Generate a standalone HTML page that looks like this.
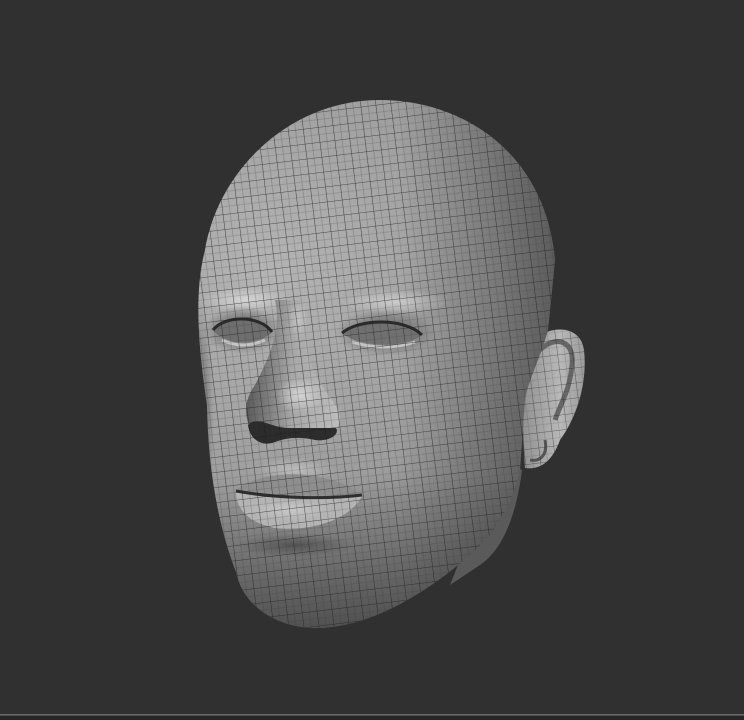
<!DOCTYPE html>
<html><head><meta charset="utf-8"><style>
html,body{margin:0;padding:0;background:#303030;width:744px;height:720px;overflow:hidden}
</style></head><body>
<svg width="744" height="720" viewBox="0 0 744 720" xmlns="http://www.w3.org/2000/svg">
<defs>
<radialGradient id="hg" cx="0.36" cy="0.38" r="0.7">
<stop offset="0" stop-color="#b4b4b4"/>
<stop offset="0.45" stop-color="#9c9c9c"/>
<stop offset="0.8" stop-color="#707070"/>
<stop offset="1" stop-color="#3c3c3c"/>
</radialGradient>
<linearGradient id="rs" x1="0" y1="0" x2="1" y2="0">
<stop offset="0.55" stop-color="#202020" stop-opacity="0"/>
<stop offset="1" stop-color="#202020" stop-opacity="0.5"/>
</linearGradient>
<linearGradient id="bs" x1="0" y1="0" x2="0" y2="1">
<stop offset="0.7" stop-color="#202020" stop-opacity="0"/>
<stop offset="1" stop-color="#202020" stop-opacity="0.5"/>
</linearGradient>
<radialGradient id="sh" cx="0.5" cy="0.5" r="0.5">
<stop offset="0" stop-color="#222" stop-opacity="0.85"/>
<stop offset="1" stop-color="#222" stop-opacity="0"/>
</radialGradient>
<radialGradient id="hl" cx="0.5" cy="0.5" r="0.5">
<stop offset="0" stop-color="#dcdcdc" stop-opacity="0.85"/>
<stop offset="1" stop-color="#dcdcdc" stop-opacity="0"/>
</radialGradient>
<linearGradient id="ng" x1="0" y1="0" x2="1" y2="0">
<stop offset="0" stop-color="#5a5a5a"/>
<stop offset="0.5" stop-color="#a8a8a8"/>
<stop offset="1" stop-color="#bdbdbd"/>
</linearGradient>
<linearGradient id="eg" x1="0" y1="0" x2="1" y2="0">
<stop offset="0" stop-color="#7a7a7a"/>
<stop offset="0.6" stop-color="#b8b8b8"/>
<stop offset="1" stop-color="#8a8a8a"/>
</linearGradient>
<pattern id="grid" width="15" height="15" patternUnits="userSpaceOnUse" patternTransform="rotate(-7)">
<path d="M15 0H0V15" fill="none" stroke="#1c1c1c" stroke-width="1.1" stroke-opacity="0.7"/>
<path d="M7.5 0V15M0 7.5H15" fill="none" stroke="#333" stroke-width="0.6" stroke-opacity="0.35"/>
</pattern>
<clipPath id="hc"><path d="M380 100 C460 100 545 150 555 260 L548 330 C540 360 528 380 525 400 L520 470 C512 505 495 535 470 555 C430 590 370 630 310 628 C270 625 242 602 236 572 C216 520 208 462 207 405 C198 345 194 292 205 250 C218 170 290 100 380 100 Z"/></clipPath>
<clipPath id="ec"><path d="M528 345 C545 325 580 322 584 350 C588 385 575 420 560 440 C552 462 540 470 525 468 C522 430 522 380 528 345 Z"/></clipPath>
</defs>
<rect width="744" height="720" fill="#303030"/>
<rect x="0" y="714" width="744" height="1.5" fill="#6a6a6a"/>
<rect x="0" y="716" width="744" height="4" fill="#262626"/>
<!-- neck -->
<path d="M500 460 L522 470 C517 510 505 548 480 565 L450 585 Z" fill="#5a5a5a"/>
<!-- ear -->
<g clip-path="url(#ec)">
<rect x="500" y="300" width="100" height="200" fill="url(#eg)"/>
<path d="M540 350 C555 335 575 340 572 365 C570 390 560 405 555 420" stroke="#666" stroke-width="5" fill="none"/>
<path d="M545 440 C548 455 540 462 530 460" stroke="#555" stroke-width="3" fill="none"/>
<rect x="500" y="300" width="100" height="200" fill="url(#grid)" opacity="0.8"/>
</g>
<g clip-path="url(#hc)">
<rect width="744" height="720" fill="url(#hg)"/>
<rect x="190" y="90" width="380" height="550" fill="url(#rs)"/>
<rect x="190" y="90" width="380" height="550" fill="url(#bs)"/>
<ellipse cx="245" cy="300" rx="45" ry="13" fill="url(#hl)"/>
<ellipse cx="395" cy="302" rx="55" ry="13" fill="url(#hl)" opacity="0.8"/>
<ellipse cx="243" cy="330" rx="40" ry="24" fill="url(#sh)" opacity="0.8"/>
<ellipse cx="385" cy="332" rx="50" ry="24" fill="url(#sh)" opacity="0.7"/>
<path d="M213 330 C225 315 260 315 272 332 C260 345 225 346 213 330 Z" fill="#6e6e6e"/>
<path d="M213 330 C225 315 260 315 272 332" stroke="#2a2a2a" stroke-width="3" fill="none"/>
<path d="M342 333 C360 318 405 318 422 335 C405 348 360 348 342 333 Z" fill="#707070"/>
<path d="M342 333 C360 318 405 318 422 335" stroke="#2a2a2a" stroke-width="3" fill="none"/>
<path d="M222 340 Q243 350 265 340" stroke="#c4c4c4" stroke-width="3" fill="none"/>
<path d="M352 342 Q385 352 415 342" stroke="#c4c4c4" stroke-width="3" fill="none"/>
<path d="M275 300 C282 330 268 360 255 385 C240 405 245 430 262 440 L300 438 C330 442 345 428 338 410 C330 395 315 380 310 360 C305 335 302 310 300 300 Z" fill="url(#ng)"/>
<ellipse cx="300" cy="395" rx="24" ry="18" fill="url(#hl)"/>
<ellipse cx="298" cy="320" rx="10" ry="20" fill="url(#hl)" opacity="0.6"/>
<path d="M248 425 C250 440 262 447 275 442 C285 438 300 436 315 440 C330 442 340 434 336 428 C322 428 305 428 290 428 C270 428 258 415 248 425 Z" fill="#2c2c2c"/>
<ellipse cx="295" cy="470" rx="40" ry="12" fill="url(#hl)" opacity="0.6"/>
<path d="M236 490 C255 475 290 470 325 478 C345 483 355 490 362 495 C330 496 280 496 236 490 Z" fill="#8e8e8e"/>
<path d="M236 492 C280 500 330 500 362 496 C350 520 310 532 275 528 C248 523 236 508 236 492 Z" fill="#b4b4b4"/>
<ellipse cx="290" cy="510" rx="40" ry="10" fill="url(#hl)" opacity="0.6"/>
<path d="M236 491 C280 499 330 499 362 495" stroke="#2e2e2e" stroke-width="3" fill="none"/>
<ellipse cx="295" cy="545" rx="60" ry="12" fill="url(#sh)" opacity="0.5"/>
<ellipse cx="200" cy="420" rx="14" ry="120" fill="url(#sh)" opacity="0.6"/>
<rect width="744" height="720" fill="url(#grid)"/>
</g>
</svg>
</body></html>
